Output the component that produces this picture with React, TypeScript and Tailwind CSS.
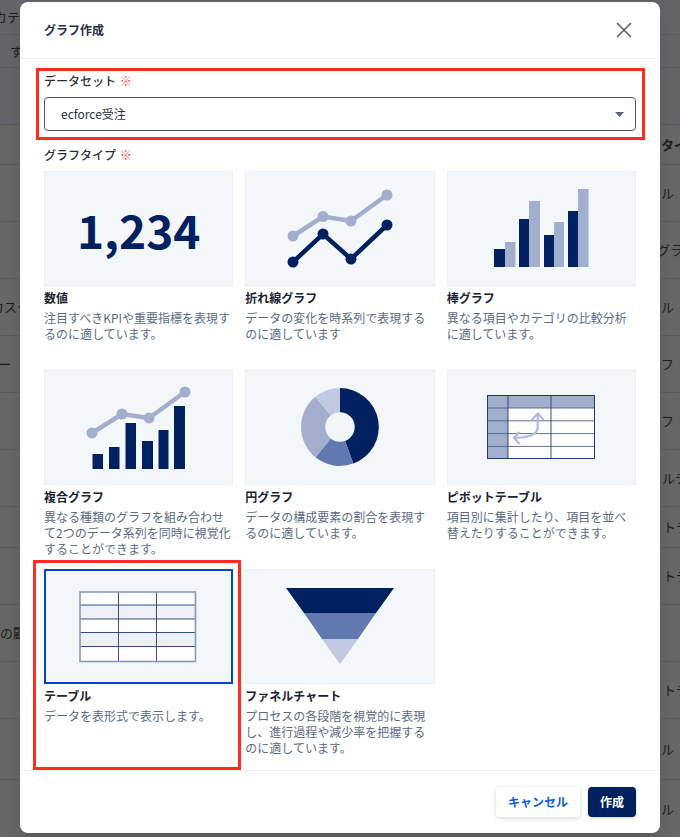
import React from "react";

const NAVY = "#00205f";
const LIGHT = "#a3aecf";
const MID = "#6278b0";
const PALE = "#c1c9e1";

const rows: { h: string; left?: React.ReactNode; right?: React.ReactNode; tone?: string }[] = [
  { h: "h-[35px]", left: <span className="-ml-[6px] block">カテゴ</span>, tone: "bg-[#636467]" },
  { h: "h-[33px]", left: <span className="ml-[10px] block">す</span>, tone: "bg-[#636467]" },
  { h: "h-[57px]", tone: "bg-[#636467]" },
  { h: "h-[40px]", right: <span className="block pl-[1px] font-bold">タイプ</span> },
  { h: "h-[57px]", right: <span className="block pl-[1px]">ル</span> },
  { h: "h-[57px]", right: <span className="-ml-[3px] block">グラフ</span> },
  { h: "h-[57px]", left: <span className="-ml-[9px] block">カスタ</span>, right: <span className="block pl-[1px]">ル</span> },
  { h: "h-[57px]", left: <span className="-ml-[2px] block">ー</span>, right: <span className="block pl-[1px]">フ</span> },
  { h: "h-[57px]", right: <span className="block pl-[1px]">フ</span> },
  { h: "h-[57px]", right: <span className="block pl-[2px]">ルチ</span> },
  { h: "h-[41px]", left: <span className="-ml-[11px] block">と</span>, right: <span className="block pl-[3px]">トテ</span> },
  { h: "h-[57px]", right: <span className="block pl-[3px]">トテ</span> },
  { h: "h-[57px]", left: <span className="block">の顧</span> },
  { h: "h-[57px]", right: <span className="block pl-[3px]">トテ</span> },
  { h: "h-[61px]", right: <span className="block pl-[1px]">ル</span> },
  { h: "h-[58px]", right: <span className="block pl-[1px]">ル</span> },
];

function Art({ x, y, children }: { x: number; y: number; children: React.ReactNode }) {
  return (
    <svg className="block h-full w-full" viewBox={`${x} ${y} 189.33 115`} preserveAspectRatio="none">
      {children}
    </svg>
  );
}

function Lines({ pts, color }: { pts: number[][]; color: string }) {
  return (
    <g>
      <polyline points={pts.map((p) => p.join(",")).join(" ")} fill="none" stroke={color} strokeWidth="4.5" />
      {pts.map((p, i) => (
        <circle key={i} cx={p[0]} cy={p[1]} r="5.5" fill={color} />
      ))}
    </g>
  );
}

function Bar({ x0, x1, top, bottom, color }: { x0: number; x1: number; top: number; bottom: number; color: string }) {
  return <rect x={x0} y={top} width={x1 - x0} height={bottom - top} fill={color} />;
}

const NumberArt = (
  <div className="flex h-full w-full items-center justify-center pt-[1px] text-[46px] leading-none font-bold text-[#00205f]">
    1,234
  </div>
);

const LineArt = (
  <Art x={245} y={171}>
    <Lines pts={[[293, 236], [323, 216.5], [351, 221], [387, 195]]} color={LIGHT} />
    <Lines pts={[[293, 262], [323, 234], [351, 259], [387, 225]]} color={NAVY} />
  </Art>
);

const BarArt = (
  <Art x={447} y={171}>
    {[
      [494, 505, 249, 515.5, 242],
      [519, 529, 219, 540, 201],
      [544, 554, 235, 564, 222],
      [568, 578, 211, 588.5, 189],
    ].map((g, i) => (
      <g key={i}>
        <Bar x0={g[1]} x1={g[3]} top={g[4]} bottom={267} color={LIGHT} />
        <Bar x0={g[0]} x1={g[1]} top={g[2]} bottom={267} color={NAVY} />
      </g>
    ))}
  </Art>
);

const ComboArt = (
  <Art x={44} y={370}>
    {[
      [92.5, 103, 454],
      [109, 119.5, 447],
      [125.5, 136, 423],
      [142, 153, 441],
      [158.5, 168.5, 430],
      [174, 185, 406],
    ].map((b, i) => (
      <Bar key={i} x0={b[0]} x1={b[1]} top={b[2]} bottom={469} color={NAVY} />
    ))}
    <Lines pts={[[92, 433], [122, 414], [149, 418], [185, 392]]} color={LIGHT} />
  </Art>
);

const PieArt = (
  <Art x={245} y={370}>
    <path d="M340 427 L340 388 A39 39 0 0 1 353.3 463.6 Z" fill={NAVY} />
    <path d="M340 427 L353.3 463.6 A39 39 0 0 1 315.5 457.3 Z" fill={MID} />
    <path d="M340 427 L315.5 457.3 A39 39 0 0 1 315.5 396.7 Z" fill={LIGHT} />
    <path d="M340 427 L315.5 396.7 A39 39 0 0 1 340 388 Z" fill={PALE} />
    <circle cx="340" cy="427" r="14.7" fill="#f3f6f8" />
  </Art>
);

const PivotArt = (
  <Art x={447} y={370}>
    <rect x="487" y="395" width="108" height="64" fill="#ffffff" />
    <rect x="487" y="395" width="108" height="13" fill={LIGHT} />
    <rect x="487" y="395" width="21" height="64" fill={LIGHT} />
    <g stroke="#1f3a7a" strokeWidth="0.9" fill="none">
      <path d="M487 408H595M487 420.8H595M487 433.6H595M487 446.4H595" stroke="#4d5f8a" />
      <path d="M508 395V459M551 395V459" />
      <rect x="487.5" y="395.5" width="107" height="63" strokeWidth="1" />
    </g>
    <g stroke="#b0bade" strokeWidth="2.2" fill="none">
      <path d="M537.7 414 V427 Q537.7 437.7 515 437.7" />
      <path d="M531.7 420 L537.7 413.5 L543.7 420" />
      <path d="M519.5 432 L514 437.7 L519.5 444" />
    </g>
  </Art>
);

const TableArt = (
  <Art x={44} y={569}>
    <rect x="80" y="592" width="115.5" height="69.5" fill="#ffffff" />
    <rect x="80" y="605" width="115.5" height="14" fill="#edf0f5" />
    <rect x="80" y="632.5" width="115.5" height="14" fill="#edf0f5" />
    <g stroke="#1f3a7a" strokeWidth="0.9" fill="none">
      <path d="M80 605H195.5M80 619H195.5M80 632.5H195.5M80 646.5H195.5" />
      <path d="M118.5 592V661.5M156.5 592V661.5" />
    </g>
    <rect x="80" y="592" width="115.5" height="69.5" fill="none" stroke="#8a97bb" strokeWidth="1.6" />
  </Art>
);

const FunnelArt = (
  <Art x={245} y={569}>
    <polygon points="286,588 394,588 376,613 304,613" fill={NAVY} />
    <polygon points="304,613 376,613 358,639 322,639" fill={MID} />
    <polygon points="322,639 358,639 340,664" fill={PALE} />
  </Art>
);

const cards: { title: string; desc: string; art: React.ReactNode; selected?: boolean }[] = [
  { title: "数値", desc: "注目すべきKPIや重要指標を表現するのに適しています。", art: NumberArt },
  { title: "折れ線グラフ", desc: "データの変化を時系列で表現するのに適しています", art: LineArt },
  { title: "棒グラフ", desc: "異なる項目やカテゴリの比較分析に適しています。", art: BarArt },
  { title: "複合グラフ", desc: "異なる種類のグラフを組み合わせて2つのデータ系列を同時に視覚化することができます。", art: ComboArt },
  { title: "円グラフ", desc: "データの構成要素の割合を表現するのに適しています。", art: PieArt },
  { title: "ピボットテーブル", desc: "項目別に集計したり、項目を並べ替えたりすることができます。", art: PivotArt },
  { title: "テーブル", desc: "データを表形式で表示します。", art: TableArt, selected: true },
  { title: "ファネルチャート", desc: "プロセスの各段階を視覚的に表現し、進行過程や減少率を把握するのに適しています。", art: FunnelArt },
];

function Card({ title, desc, art, selected }: { title: string; desc: string; art: React.ReactNode; selected?: boolean }) {
  return (
    <div className="relative h-[187px]">
      {selected && (
        <div className="pointer-events-none absolute -top-[9px] -right-[8px] -bottom-[14px] -left-[11px] border-[3px] border-[#ff2d20]" />
      )}
      <div
        className={
          selected
            ? "h-[115px] bg-[#f3f7f9] shadow-[inset_0_0_0_2px_#0047c8]"
            : "h-[115px] bg-[#f3f7f9] shadow-[inset_0_0_0_1px_#ebeff2]"
        }
      >
        {art}
      </div>
      <div className="mt-[3px] text-[12px] leading-[18px] font-bold text-[#1c2230]">{title}</div>
      <div className="mt-[3px] text-[12px] leading-[16px] text-[#5b6b82]">{desc}</div>
    </div>
  );
}

export default function App() {
  return (
    <div className="relative h-[837px] w-[680px] overflow-hidden bg-[#666666] [font-family:'Noto_Sans_CJK_JP',sans-serif]">
      <div>
        {rows.map((r, i) => (
          <div
            key={i}
            className={`flex items-center justify-between border-b border-[#5a5a5b] text-[13px] whitespace-nowrap text-[#1e1e1e] ${r.h} ${r.tone ?? ""}`}
          >
            <div className="w-[20px] overflow-hidden">{r.left}</div>
            <div className="w-[20px] overflow-hidden">{r.right}</div>
          </div>
        ))}
      </div>

      <div className="absolute top-[2px] left-[20px] w-[640px] rounded-lg bg-white shadow-lg">
        <div className="flex h-[57px] items-center justify-between border-b border-[#eceef1] pr-[28px] pl-[24px]">
          <h2 className="text-[12px] font-bold text-[#2a3040]">グラフ作成</h2>
          <svg width="16" height="16" viewBox="0 0 16 16" fill="none" stroke="#5d6478" strokeWidth="1.7">
            <path d="M1 1L15 15M15 1L1 15" />
          </svg>
        </div>

        <div className="px-[24px] pt-[14px] pb-[14px]">
          <div className="relative">
            <div className="pointer-events-none absolute -top-[5px] -right-[9px] -bottom-[9px] -left-[8px] border-[3px] border-[#ff2d20]" />
            <div className="text-[12px] leading-[16px] font-medium text-[#2a3040]">
              データセット <span className="ml-[1px] text-[#ea4a42]">※</span>
            </div>
            <div className="mt-[8px] flex h-[34px] items-center justify-between rounded border border-[#4f5568] pr-[11px] pl-[16px] text-[12px] text-[#2a3040]">
              <span>ecforce受注</span>
              <svg width="9" height="5" viewBox="0 0 9 5" fill="#5d6478">
                <path d="M0 0H9L4.5 5Z" />
              </svg>
            </div>
          </div>

          <div className="mt-[16px] text-[12px] leading-[16px] font-medium text-[#2a3040]">
            グラフタイプ <span className="ml-[1px] text-[#ea4a42]">※</span>
          </div>

          <div className="mt-[8px] grid grid-cols-3 gap-[12px]">
            {cards.map((c) => (
              <Card key={c.title} {...c} />
            ))}
          </div>
        </div>

        <div className="flex h-[63px] items-start justify-end gap-[8px] border-t border-[#eceef1] pt-[16px] pr-[24px]">
          <button className="h-[30px] rounded bg-white px-[12px] text-[12px] font-bold text-[#0b5fd8] shadow-[0_1px_4px_rgba(0,0,0,0.18)]">
            キャンセル
          </button>
          <button className="h-[30px] rounded bg-[#00205f] px-[12px] text-[12px] font-bold text-white shadow-[0_1px_3px_rgba(0,0,0,0.2)]">
            作成
          </button>
        </div>
      </div>
    </div>
  );
}
